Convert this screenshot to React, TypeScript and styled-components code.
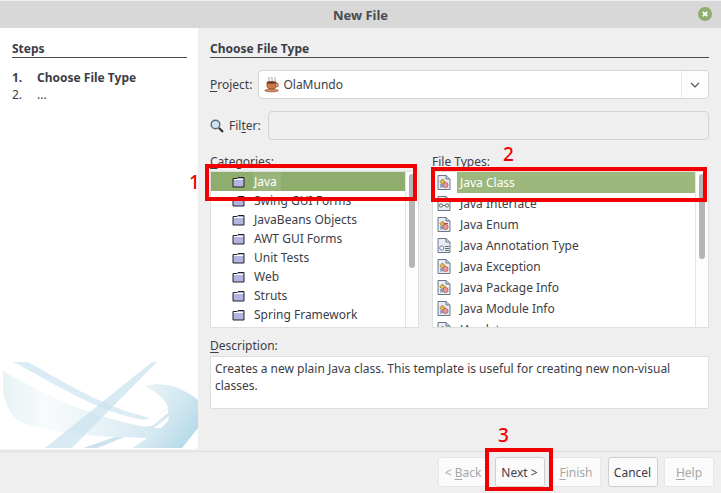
import React from "react";
import styled, { createGlobalStyle } from "styled-components";

const GlobalStyle = createGlobalStyle`
  html, body {
    margin: 0;
    padding: 0;
    background: #efefef;
  }
  * {
    box-sizing: border-box;
  }
`;

const Dialog = styled.div`
  position: relative;
  width: 721px;
  height: 493px;
  display: flex;
  flex-direction: column;
  overflow: hidden;
  background: #efefef;
  color: #3d3d46;
  font-family: "Noto Sans", sans-serif;
  font-size: 12px;
`;

const TitleBar = styled.div`
  position: relative;
  flex: 0 0 28px;
  display: flex;
  align-items: center;
  justify-content: center;
  background: #d8d8d8;
  border-top: 1px solid #f0f0f0;
  font-size: 13px;
  font-weight: 700;
  color: #4a4a50;
`;

const CloseIcon = styled.svg`
  position: absolute;
  right: 9px;
  top: 6px;
`;

const Body = styled.div`
  flex: 0 0 421px;
  display: flex;
`;

const Sidebar = styled.div`
  width: 198px;
  display: flex;
  flex-direction: column;
  background: #fff;
  padding-top: 12px;
`;

const SidebarContent = styled.div`
  flex: 1;
  padding: 0 11px 0 12px;
`;

const Heading = styled.div`
  height: 18px;
  line-height: 17px;
  font-weight: 700;
  border-bottom: 1px solid #4a4a4a;
`;

const StepList = styled.div`
  margin-top: 11px;
`;

const Step = styled.div<{ $current?: boolean }>`
  display: flex;
  height: 17px;
  line-height: 18px;
  font-weight: ${(p) => (p.$current ? 700 : 400)};
`;

const StepNumber = styled.span`
  width: 25px;
`;

const Main = styled.div`
  flex: 1;
  display: flex;
  flex-direction: column;
  padding: 12px 12px 0;
`;

const ProjectRow = styled.div`
  margin-top: 12px;
  display: flex;
  align-items: center;
  gap: 6px;
`;

const FilterRow = styled.div`
  margin-top: 12px;
  display: flex;
  align-items: center;
`;

const Combo = styled.div`
  flex: 1;
  height: 29px;
  display: flex;
  align-items: center;
  background: #fff;
  border: 1px solid #d4d4d4;
  border-radius: 4px;
  padding-left: 5px;
  font-size: 12px;
  gap: 3px;
`;

const ComboArrow = styled.div`
  margin-left: auto;
  width: 27px;
  height: 100%;
  display: flex;
  align-items: center;
  justify-content: center;
  background: #fdfdfd;
  border-left: 1px solid #ececec;
  border-radius: 0 4px 4px 0;
`;

const FilterInput = styled.div`
  flex: 1;
  height: 29px;
  margin-left: 7px;
  background: #efefef;
  border: 1px solid #d4d4d4;
  border-radius: 4px;
`;

const Label = styled.span`
  white-space: nowrap;
`;

const Mnemonic = styled.span`
  text-decoration: underline;
  text-underline-offset: 2px;
`;

const MagnifierIcon = styled.svg`
  margin-right: 5px;
`;

const Lists = styled.div`
  margin-top: 13px;
  display: flex;
  gap: 13px;
`;

const ListColumn = styled.div<{ $width: number }>`
  width: ${(p) => p.$width}px;
  display: flex;
  flex-direction: column;
`;

const ListLabel = styled.div`
  height: 18px;
  line-height: 18px;
`;

const ListBox = styled.div`
  position: relative;
  height: 157px;
  display: flex;
  background: #fff;
  border: 1px solid #dfdfdf;
  overflow: hidden;
`;

const Rows = styled.div`
  flex: 1;
  min-width: 0;
  overflow: hidden;
`;

const ScrollTrack = styled.div`
  flex: 0 0 12px;
  background: #fdfdfd;
  border-left: 1px solid #e4e4e4;
  padding: 2px 3px 0 3px;
`;

const ScrollThumb = styled.div<{ $height: number }>`
  width: 6px;
  height: ${(p) => p.$height}px;
  background: #b5b5b5;
  border-radius: 3px;
`;

const CategoryRow = styled.div<{ $selected?: boolean }>`
  height: 19px;
  display: flex;
  align-items: center;
  padding-left: 21px;
  background: ${(p) => (p.$selected ? "#8fae6e" : "transparent")};
  color: ${(p) => (p.$selected ? "#fff" : "inherit")};
`;

const CategoryName = styled.span<{ $selected?: boolean }>`
  margin-left: 8px;
  padding: 0 4px 0 1px;
  line-height: 19px;
  background: ${(p) => (p.$selected ? "#9ab57c" : "transparent")};
`;

const TypeRow = styled.div`
  height: 21px;
  display: flex;
  align-items: center;
  padding-left: 4px;
`;

const TypeName = styled.span<{ $selected?: boolean }>`
  flex: 1;
  height: 21px;
  margin-left: 6px;
  line-height: 21px;
  padding-left: 3px;
  background: ${(p) => (p.$selected ? "#9cb87c" : "transparent")};
  color: ${(p) => (p.$selected ? "#fff" : "inherit")};
`;

const DescriptionLabel = styled.div`
  margin-top: 8px;
  height: 20px;
  line-height: 19px;
`;

const DescriptionBox = styled.div`
  height: 53px;
  padding: 3px 4px;
  background: #fff;
  border: 1px solid #dfdfdf;
  line-height: 17px;
`;

const Footer = styled.div`
  flex: 1;
  display: flex;
  justify-content: flex-end;
  gap: 6.5px;
  padding: 5px 7px 0 0;
  margin-top: 2px;
  border-top: 1px solid #dcdcdc;
  margin-left: 1px;
`;

const Button = styled.div<{ $disabled?: boolean }>`
  width: 50px;
  height: 30px;
  display: flex;
  align-items: center;
  justify-content: center;
  background: #fbfbfb;
  border: 1px solid ${(p) => (p.$disabled ? "#e6e6e6" : "#cfcfcf")};
  border-radius: 3px;
  color: ${(p) => (p.$disabled ? "#a6a6a6" : "inherit")};
`;

const Annotation = styled.div<{ $x: number; $y: number; $w: number; $h: number }>`
  position: absolute;
  left: ${(p) => p.$x}px;
  top: ${(p) => p.$y}px;
  width: ${(p) => p.$w}px;
  height: ${(p) => p.$h}px;
  border: 4px solid #f00000;
`;

const AnnotationNumber = styled.div<{ $x: number; $y: number }>`
  position: absolute;
  left: ${(p) => p.$x}px;
  top: ${(p) => p.$y}px;
  color: #f00000;
  font-size: 19px;
  font-weight: 500;
  line-height: 22px;
`;

const Folder = () => (
  <svg width="13" height="12" viewBox="0 0 13 12">
    <path d="M1 2.5 L1 11 L12 11 L12 1.5 L6 1.5 L5 2.5 Z" fill="#b4b4e0" stroke="#23232e" strokeWidth="1" />
    <path d="M2 3.5 H11" stroke="#ffffff" strokeWidth="1" />
  </svg>
);

const JavaFile = ({ kind }: { kind: "class" | "iface" | "enum" | "anno" }) => (
  <svg width="14" height="15" viewBox="0 0 14 15">
    <path d="M1 .5 H9 L13 4 V14.5 H1 Z" fill="#e9edf3" stroke="#6b7788" />
    <path d="M9 .5 V4 H13" fill="#c9d1dc" stroke="#6b7788" />
    {kind === "iface" && (
      <>
        <circle cx="4" cy="9.5" r="1.6" fill="#fff" stroke="#666" />
        <circle cx="10" cy="9.5" r="1.6" fill="#fff" stroke="#666" />
        <path d="M5.5 9.5 H8.5" stroke="#666" />
      </>
    )}
    {kind === "anno" && (
      <>
        <circle cx="4.8" cy="10" r="2.1" fill="#fff" stroke="#5a7bb0" />
        <path d="M8 8.5 H12 M8 10.5 H12 M8 12.5 H12" stroke="#666" />
      </>
    )}
    {(kind === "class" || kind === "enum") && (
      <>
        <path d="M5.5 4 L8.2 6.8 L5.5 9.5 L2.8 6.8 Z" fill="#e6b94f" stroke="#8f6b22" strokeWidth=".7" />
        <rect x="3" y="9" width="3" height="3.5" fill="#8ca6c8" />
        <circle cx="8.5" cy="10" r="2.6" fill="#e89a9a" stroke="#b04b4b" strokeWidth=".7" />
        {kind === "enum" && <path d="M6.5 6.6 H11" stroke="#c2443f" strokeWidth="1.2" />}
      </>
    )}
  </svg>
);

const CoffeeCup = () => (
  <svg width="16" height="17" viewBox="0 0 16 17">
    <path d="M5 1 C4 3 6 3 5 5 M8 1 C7 3 9 3 8 5 M11 1 C10 3 12 3 11 5" stroke="#8a8a8a" fill="none" strokeWidth=".8" />
    <path d="M3 6 H12 V10 C12 12.5 10 13 7.5 13 C5 13 3 12.5 3 10 Z" fill="#d0764a" stroke="#8a4a2a" strokeWidth=".8" />
    <ellipse cx="7.5" cy="6.5" rx="4.5" ry="1.3" fill="#6d3b20" />
    <path d="M12 7.5 C15 7 15 11 11.5 11" stroke="#a85a34" fill="none" strokeWidth="1.2" />
    <ellipse cx="7.5" cy="14.5" rx="6.8" ry="1.4" fill="#d58a60" stroke="#8a4a2a" strokeWidth=".6" />
  </svg>
);

const Swoosh = () => (
  <svg width="198" height="87" viewBox="0 0 198 87" style={{ display: "block", flex: "0 0 87px" }}>
    <defs>
      <linearGradient id="wide" x1="0" x2="1" y1="0" y2="0">
        <stop offset="0" stopColor="#e8f3f7" />
        <stop offset="0.3" stopColor="#f7fbfc" />
        <stop offset="0.55" stopColor="#eef6f9" />
        <stop offset="1" stopColor="#d6e9f2" />
      </linearGradient>
      <linearGradient id="right" x1="0" x2="1" y1="0" y2="0.7">
        <stop offset="0" stopColor="#f1f8fa" />
        <stop offset="0.6" stopColor="#d3e8f1" />
        <stop offset="1" stopColor="#b6daea" />
      </linearGradient>
    </defs>
    <path d="M3 9 C30 24 60 40 93 51 C110 57 125 61 146 65 L147 76 L117 75 C85 74 50 70 23 61 C14 57 7 48 3 31 Z" fill="url(#wide)" />
    <path d="M13 0 H28 C55 15 80 30 103 40 C118 47 135 52 150 56 L143 58 C125 54 112 50 100 45 C70 32 40 14 13 0 Z" fill="#dcecf4" />
    <path d="M152 0 H157 L72 86 H45 Z" fill="#c8e1ec" fillOpacity=".7" />
    <path d="M145 24 C152 22 160 22 167 23 C178 25 190 31 198 38 V66 L182 86 H132 L147 76 L146 65 L168 45 C166 38 158 31 145 24 Z" fill="url(#right)" />
    <path d="M146 64 H152 L168 51 L168 46 Z" fill="#fff" />
    <path d="M154 66 H161 L168 59 L169 54 Z" fill="#fff" />
    <path d="M83 86 L115 75 H125 L98 86 Z" fill="#cde4ee" />
    <path d="M112 86 L132 76 H147 L132 86 Z" fill="#fff" />
    <path d="M98 86 L125 75 H129 L106 86 Z" fill="#fff" />
  </svg>
);

const categories = [
  "Java",
  "Swing GUI Forms",
  "JavaBeans Objects",
  "AWT GUI Forms",
  "Unit Tests",
  "Web",
  "Struts",
  "Spring Framework",
  "",
];

const fileTypes: { name: string; kind: "class" | "iface" | "enum" | "anno" }[] = [
  { name: "Java Class", kind: "class" },
  { name: "Java Interface", kind: "iface" },
  { name: "Java Enum", kind: "enum" },
  { name: "Java Annotation Type", kind: "anno" },
  { name: "Java Exception", kind: "class" },
  { name: "Java Package Info", kind: "class" },
  { name: "Java Module Info", kind: "class" },
  { name: "JApplet", kind: "class" },
];

const App = () => {
  return (
    <Dialog>
      <GlobalStyle />
      <TitleBar>
        New File
        <CloseIcon width="14" height="14" viewBox="0 0 14 14">
          <circle cx="7" cy="7" r="7" fill="#8fae6e" />
          <path d="M4.8 4.8 L9.2 9.2 M9.2 4.8 L4.8 9.2" stroke="#fff" strokeWidth="1.8" />
        </CloseIcon>
      </TitleBar>
      <Body>
        <Sidebar>
          <SidebarContent>
            <Heading>Steps</Heading>
            <StepList>
              <Step $current>
                <StepNumber>1.</StepNumber>
                <span>Choose File Type</span>
              </Step>
              <Step>
                <StepNumber>2.</StepNumber>
                <span>...</span>
              </Step>
            </StepList>
          </SidebarContent>
          <Swoosh />
        </Sidebar>
        <Main>
          <Heading>Choose File Type</Heading>
          <ProjectRow>
            <Label>
              <Mnemonic>P</Mnemonic>roject:
            </Label>
            <Combo>
              <CoffeeCup />
              OlaMundo
              <ComboArrow>
                <svg width="10" height="6" viewBox="0 0 10 6">
                  <path d="M1 1 L5 5 L9 1" stroke="#555" strokeWidth="1.2" fill="none" />
                </svg>
              </ComboArrow>
            </Combo>
          </ProjectRow>
          <FilterRow>
            <MagnifierIcon width="14" height="14" viewBox="0 0 14 14">
              <circle cx="5.5" cy="5.5" r="4.3" fill="#cfe3f2" stroke="#5c6a78" strokeWidth="1.4" />
              <path d="M9 9 L13 13" stroke="#2e2e2e" strokeWidth="2.2" />
            </MagnifierIcon>
            <Label>
              Fil<Mnemonic>t</Mnemonic>er:
            </Label>
            <FilterInput />
          </FilterRow>
          <Lists>
            <ListColumn $width={209}>
              <ListLabel>
                <Mnemonic>C</Mnemonic>ategories:
              </ListLabel>
              <ListBox>
                <Rows>
                  {categories.map((name, i) => (
                    <CategoryRow key={i} $selected={i === 0}>
                      <Folder />
                      <CategoryName $selected={i === 0}>{name}</CategoryName>
                    </CategoryRow>
                  ))}
                </Rows>
                <ScrollTrack>
                  <ScrollThumb $height={94} />
                </ScrollTrack>
              </ListBox>
            </ListColumn>
            <ListColumn $width={277}>
              <ListLabel>
                <Mnemonic>F</Mnemonic>ile Types:
              </ListLabel>
              <ListBox>
                <Rows>
                  {fileTypes.map((t, i) => (
                    <TypeRow key={t.name}>
                      <JavaFile kind={t.kind} />
                      <TypeName $selected={i === 0}>{t.name}</TypeName>
                    </TypeRow>
                  ))}
                </Rows>
                <ScrollTrack>
                  <ScrollThumb $height={85} />
                </ScrollTrack>
              </ListBox>
            </ListColumn>
          </Lists>
          <DescriptionLabel>
            <Mnemonic>D</Mnemonic>escription:
          </DescriptionLabel>
          <DescriptionBox>
            Creates a new plain Java class. This template is useful for creating new non-visual classes.
          </DescriptionBox>
        </Main>
      </Body>
      <Footer>
        <Button $disabled>
          &lt;&nbsp;<Mnemonic>B</Mnemonic>ack
        </Button>
        <Button>Next &gt;</Button>
        <Button $disabled>
          <Mnemonic>F</Mnemonic>inish
        </Button>
        <Button>Cancel</Button>
        <Button $disabled>
          <Mnemonic>H</Mnemonic>elp
        </Button>
      </Footer>
      <Annotation $x={205} $y={164} $w={212} $h={37} />
      <AnnotationNumber $x={189} $y={171}>1</AnnotationNumber>
      <Annotation $x={431} $y={167} $w={276} $h={35} />
      <AnnotationNumber $x={503} $y={143}>2</AnnotationNumber>
      <Annotation $x={485} $y={448} $w={68} $h={43} />
      <AnnotationNumber $x={498} $y={424}>3</AnnotationNumber>
    </Dialog>
  );
};

export default App;
